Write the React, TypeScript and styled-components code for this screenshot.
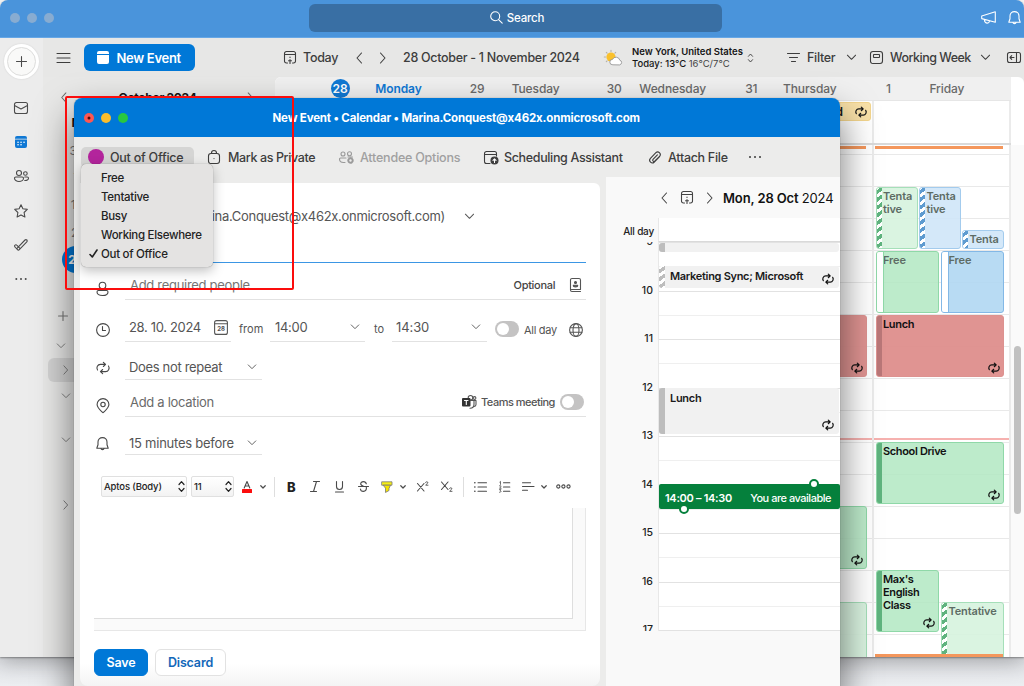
import React from 'react'
import styled, { createGlobalStyle, css } from 'styled-components'

const GlobalStyle = createGlobalStyle`
*{ box-sizing:border-box; }
body{
  margin:0;
  overflow:hidden;
  font-family:Inter, "Liberation Sans", sans-serif;
  font-size:12px;
  color:#3d3d3d;
}
`
const Desktop = styled.div`
position:relative;
width:1024px;
height:686px;
overflow:hidden;
background:linear-gradient(#fff 0 20px, #e3e5e9 20px 660px, #eceef1 686px);
`

/* ---------- shared ---------- */
const Svg = styled.svg<{ $w?: number }>`
flex:none;
display:block;
fill:none;
stroke:currentColor;
stroke-width:${(props) => props.$w ?? 1.1};
stroke-linecap:round;
stroke-linejoin:round;
overflow:visible;
`
const Text = styled.span<{ $w?: number; $size?: number; $weight?: number; $ls?: number; $color?: string }>`
flex:none;
white-space:nowrap;
${(props) => props.$w && css`width:${props.$w}px;`}
font-size:${(props) => props.$size ?? 12.5}px;
font-weight:${(props) => props.$weight ?? 500};
letter-spacing:${(props) => props.$ls ?? -0.3}px;
color:${(props) => props.$color ?? 'inherit'};
`
type ChevronProps = { dir: 'left' | 'right' | 'down'; size?: number; w?: number }
const chevrons = { left: 'M7 1 2.5 6 7 11', right: 'M3 1 7.5 6 3 11', down: 'M1 3.5 5.5 8 10 3.5' }
const Chevron = ({ dir, size = 11, w = 1.1 }: ChevronProps) => (
  <Svg $w={w} width={size} height={size} viewBox="0 0 11 12"><path d={chevrons[dir]} /></Svg>
)
const Updown = ({ h = 11, w = 1.1 }: { h?: number; w?: number }) => (
  <Svg $w={w} width={7} height={h} viewBox="0 0 7 12"><path d="M1 4 3.5 1.2 6 4M1 8l2.5 2.8L6 8" /></Svg>
)
const TodayIcon = () => (
  <Svg width="12" height="13" viewBox="0 0 12 13">
    <path d="M3.5 12H2.4A1.9 1.9 0 0 1 .5 10V2.4A1.9 1.9 0 0 1 2.4.5h7.2a1.9 1.9 0 0 1 1.900 1.900V10a1.900 1.900 0 0 1-1.900 2H8.500M.5 3.500h11M6 6v.5M6 8.500v4M4.500 9.800h3" />
  </Svg>
)
const RepeatIcon = ({ size = 12, w = 1.2 }: { size?: number; w?: number }) => (
  <Svg $w={w} width={size} height={size} viewBox="0 0 12 12">
    <path d="M1.300 7.700A3.100 3.100 0 0 1 3.800 2.900H8M6.300 1.100 8.200 2.900 6.300 4.700M10.700 4.300A3.100 3.100 0 0 1 8.200 9.100H4M5.700 10.900 3.800 9.100 5.700 7.300" />
  </Svg>
)
const BellIcon = () => (
  <Svg width="13" height="14" viewBox="0 0 13 14">
    <path d="M6.500.6C3.800.6 2 2.600 2 5v2.700L.8 11.200h11.400L11 7.700V5C11 2.600 9.200.6 6.500.6ZM4.800 11.400a1.800 1.800 0 0 0 3.400 0" />
  </Svg>
)

/* ---------- main window ---------- */
const MainWindow = styled.div`
width:1024px;
height:657px;
display:flex;
flex-direction:column;
overflow:hidden;
border-radius:8px 8px 0 0;
background:#e8e8e7;
box-shadow:0 1px 2px rgba(0,0,0,.35), 0 4px 22px rgba(0,0,0,.3);
`
const TitleBar = styled.header`
height:38px;
flex:none;
display:flex;
align-items:center;
padding:0 3px 2px 9.500px;
background:#4a94db;
border-bottom:1px solid #66a7e6;
color:#fff;
`
const Dots = styled.div`
width:299.500px;
display:flex;
gap:7.300px;
`
const Dot = styled.i<{ $color: string }>`
width:10px;
height:10px;
flex:none;
border-radius:50%;
background:${(props) => props.$color};
display:flex;
align-items:center;
justify-content:center;
`
const SearchBox = styled.div`
width:413px;
height:28px;
border-radius:6px;
background:#396fa4;
display:flex;
align-items:center;
justify-content:center;
gap:4px;
padding-left:3px;
`
const TitleIcons = styled.div`
margin-left:auto;
display:flex;
align-items:center;
gap:12px;
`
const Body = styled.div`
flex:1;
min-height:0;
display:flex;
`
const Rail = styled.nav`
width:43px;
flex:none;
background:#ececec;
display:flex;
flex-direction:column;
align-items:center;
padding:6px 1px 0 0;
color:#4b4b4b;
`
const AddButton = styled.div`
width:35px;
height:35px;
border-radius:50%;
background:#fff;
box-shadow:0 0 2px rgba(0,0,0,.12);
display:flex;
align-items:center;
justify-content:center;
margin-bottom:12px;
`
const AddRing = styled.div`
width:29px;
height:29px;
border-radius:50%;
border:1px solid #dcdcdb;
background:#f9f9f8;
display:flex;
align-items:center;
justify-content:center;
`
const RailItem = styled.div<{ $active?: boolean }>`
height:34.200px;
display:flex;
align-items:center;
color:${(props) => (props.$active ? '#0f78d4' : 'inherit')};
`
const Content = styled.div`
flex:1;
display:flex;
flex-direction:column;
min-width:0;
`
const Toolbar = styled.div`
height:39px;
flex:none;
display:flex;
align-items:center;
padding-left:14px;
background:#e7e7e6;
`
const NewEventButton = styled.div`
width:111px;
height:27px;
margin:0 89px 0 14px;
border-radius:6px;
background:#0078d7;
color:#fff;
display:flex;
align-items:center;
padding-left:13px;
gap:7.500px;
`
const Gap = styled.span<{ $w: number }>`
flex:none;
width:${(props) => props.$w}px;
`
const Weather = styled.div`
width:115px;
display:flex;
flex-direction:column;
color:#161616;
line-height:12px;
`
const Lower = styled.div`
flex:1;
min-height:0;
display:flex;
`
const MonthPane = styled.aside`
width:232px;
flex:none;
padding-top:13px;
`
const MonthHead = styled.div`
display:flex;
align-items:center;
justify-content:space-between;
height:14px;
padding:0 19px 0 16px;
color:#6b6b6b;
b{ color:#161616; font-size:12px; letter-spacing:-.3px; }
`
const MonthEdge = styled.div`
display:flex;
flex-direction:column;
padding:5px 0 0 26px;
color:#777;
`
const MonthDay = styled.span<{ $today?: boolean; $dark?: boolean }>`
width:16px;
height:27.400px;
display:flex;
align-items:center;
justify-content:center;
font-size:12px;
font-weight:${(props) => (props.$today || props.$dark ? 700 : 400)};
color:${(props) => (props.$today ? '#fff' : props.$dark ? '#111' : 'inherit')};
${(props) => props.$today && css`
width:28px;
margin-left:-7px;
border-radius:50%;
background:#0078d7;
`}
`
const TreeRow = styled.div<{ $gap: number; $left: number; $selected?: boolean }>`
height:24px;
display:flex;
align-items:center;
margin:${(props) => props.$gap}px 0 0 5px;
padding-left:${(props) => props.$left}px;
color:#777;
${(props) => props.$selected && css`background:#d3d3d3; border-radius:6px;`}
`
const Calendar = styled.section`
flex:1;
min-width:0;
display:flex;
border-radius:6px 6px 0 0;
overflow:hidden;
background:#fff;
`
const CalMain = styled.div`
width:736px;
flex:none;
`
const WeekHead = styled.div`
height:24px;
display:flex;
padding-left:50.500px;
background:#f0f0f0;
border-bottom:1px solid #e6e6e6;
`
const DayHead = styled.div<{ $today?: boolean }>`
width:137.200px;
display:flex;
align-items:center;
color:${(props) => (props.$today ? '#0f78d4' : '#6a6a6a')};
font-size:12px;
font-weight:${(props) => (props.$today ? 600 : 500)};
letter-spacing:-.1px;
`
const DayNumber = styled.span<{ $today?: boolean }>`
width:19px;
height:19px;
margin:0 4px 0 5px;
border-radius:50%;
display:flex;
align-items:center;
justify-content:center;
background:${(props) => (props.$today ? '#0f78d4' : 'transparent')};
color:${(props) => (props.$today ? '#fff' : 'inherit')};
`
const DayName = styled.span`
width:90px;
text-align:center;
`
const AllDayBand = styled.div`
height:44px;
border-bottom:2px solid #dadada;
display:grid;
grid-template-columns:599px 137px;
`
const BandCell = styled.div`
border-right:2px solid #ebebeb;
display:flex;
justify-content:flex-end;
`
const AllDayEvent = styled.div`
width:200px;
height:19px;
margin:1px 1px 0 0;
border-radius:3px;
border:1px solid #f3d58d;
background:#f9e1a8;
display:flex;
align-items:center;
justify-content:flex-end;
gap:12px;
padding-right:3px;
font-weight:600;
color:#161616;
`
const Hours = styled.div`
height:512px;
display:grid;
grid-template-columns:599px 137px;
background:repeating-linear-gradient(#e9e9e9 0 1px, transparent 1px 32px) 0 9px;
`
const HourColumn = styled.div`
position:relative;
border-right:2px solid #ebebeb;
overflow:hidden;
`
const tones = {
  green: { bg: 'rgba(177,232,194,.85)', line: '#8fd8a8', bar: '#5fb37e' },
  pale: { bg: 'rgba(214,243,222,.9)', line: '#a5dfb9', bar: '#5fb37e' },
  sky: { bg: 'rgba(207,229,248,.9)', line: '#a3cbed', bar: '#5e9bd0' },
  blue: { bg: 'rgba(176,215,242,.9)', line: '#83b8e6', bar: '#83b8e6' },
  red: { bg: 'rgba(221,139,137,.92)', line: '#dd9290', bar: '#b97778' },
}
type Tone = keyof typeof tones
type BlockProps = { $x: number; $y: number; $w: number; $h: number; $tone: Tone; $bar?: 'solid' | 'stripes' | 'empty'; $muted?: boolean }
const EventBlock = styled.div<BlockProps>`
position:absolute;
left:${(props) => props.$x}px;
top:${(props) => props.$y}px;
width:${(props) => props.$w}px;
height:${(props) => props.$h}px;
border:1px solid ${(props) => tones[props.$tone].line};
border-radius:3px;
background:${(props) => tones[props.$tone].bg};
padding:2px 0 0 6.500px;
font-size:11px;
font-weight:600;
line-height:13px;
letter-spacing:${(props) => (props.$muted ? -0.15 : -0.35)}px;
color:${(props) => (props.$muted ? '#5d6b64' : '#111')};
white-space:pre-line;
overflow:hidden;
&::before{
  content:"";
  position:absolute;
  left:-1px;
  top:-1px;
  bottom:-1px;
  width:6px;
  ${(props) => props.$bar === 'solid' && css`background:${tones[props.$tone].bar};`}
  ${(props) => props.$bar === 'empty' && css`background:#fff; border:1px solid ${tones[props.$tone].line};`}
  ${(props) => props.$bar === 'stripes' && css`background:repeating-linear-gradient(145deg, #fff 0 3px, ${tones[props.$tone].bar} 3px 6.400px);`}
}
`
const Corner = styled.span`
position:absolute;
right:3px;
bottom:2px;
color:#111;
`
const OrangeBar = styled.div<{ $x: number; $y: number; $w: number }>`
position:absolute;
left:${(props) => props.$x}px;
top:${(props) => props.$y}px;
width:${(props) => props.$w}px;
height:3px;
background:#f4975c;
`
const NowLine = styled.div`
position:absolute;
left:0;
right:-2px;
top:293px;
height:2px;
background:#f6b1af;
`
const ScrollTrack = styled.div`
flex:1;
margin-top:68px;
background:#fafafa;
padding:201px 0 0 3px;
`
const ScrollThumb = styled.div`
width:7px;
height:168px;
border-radius:4px;
background:#c1c1c1;
`

/* ---------- event window ---------- */
const EventWindow = styled.div`
position:absolute;
left:74px;
top:98px;
width:766px;
height:610px;
border-radius:8px;
background:#ececeb;
box-shadow:0 0 1px rgba(0,0,0,.5), 0 18px 36px 2px rgba(0,0,0,.5);
display:flex;
flex-direction:column;
overflow:hidden;
`
const EventTitle = styled.header`
height:39px;
flex:none;
display:flex;
align-items:center;
padding-left:9.500px;
background:#0078d7;
color:#fff;
`
const Lights = styled.div`
display:flex;
gap:7.200px;
width:189px;
`
const EventTools = styled.div`
height:40px;
flex:none;
display:flex;
align-items:center;
padding-left:7px;
color:#3d3d3d;
`
const StatusButton = styled.div`
width:113px;
height:21px;
border-radius:5px;
background:#d5d5d4;
display:flex;
align-items:center;
padding-left:7px;
gap:6px;
margin-right:14px;
`
const StatusDot = styled.i`
width:16px;
height:16px;
border-radius:50%;
background:#b3249c;
`
const EventBody = styled.div`
flex:1;
min-height:0;
display:flex;
justify-content:space-between;
padding-left:6px;
`
const Form = styled.div`
width:520px;
height:503px;
margin-top:6px;
border-radius:0 6px 8px 8px;
background:linear-gradient(#fff 480px, #f4f4f4);
color:#555;
`
const Row = styled.div<{ $h: number }>`
height:${(props) => props.$h}px;
display:flex;
align-items:flex-end;
padding-left:16px;
`
const RowIcon = styled.span<{ $up: number }>`
width:29px;
flex:none;
color:#474747;
padding-bottom:${(props) => props.$up}px;
`
const Field = styled.div<{ $w: number; $h?: number; $mr?: number; $pad?: number; $accent?: boolean }>`
width:${(props) => props.$w}px;
height:${(props) => props.$h ?? 28}px;
flex:none;
margin-right:${(props) => props.$mr ?? 0}px;
padding-left:${(props) => props.$pad ?? 4}px;
display:flex;
align-items:center;
border-bottom:1px solid ${(props) => (props.$accent ? '#3b96e4' : '#e2e2e2')};
`
const Inline = styled.div<{ $w: number; $h: number; $end?: boolean; $color?: string }>`
width:${(props) => props.$w}px;
height:${(props) => props.$h}px;
flex:none;
display:flex;
align-items:center;
justify-content:${(props) => (props.$end ? 'flex-end' : 'flex-start')};
color:${(props) => props.$color ?? 'inherit'};
`
const Toggle = styled.span`
width:24px;
height:16px;
flex:none;
border-radius:8px;
background:#c4c3c3;
padding:2px;
&::after{
  content:"";
  display:block;
  width:12px;
  height:12px;
  border-radius:50%;
  background:#fff;
}
`
const FormatBar = styled.div`
height:21px;
margin:21px 0 11px 21px;
display:flex;
align-items:center;
color:#4a4a4a;
`
const Select = styled.div<{ $w: number }>`
width:${(props) => props.$w}px;
height:21px;
margin-right:4px;
padding:0 1px 0 2px;
border:1px solid #e0e0e0;
border-radius:2px;
background:linear-gradient(#fff, #f3f3f3);
display:flex;
align-items:center;
justify-content:space-between;
color:#222;
font-size:9.500px;
font-weight:500;
letter-spacing:-.15px;
`
const Divider = styled.i`
width:1px;
height:20px;
background:#dedede;
`
const Editor = styled.div`
width:492px;
height:123px;
margin-left:14px;
padding:0 12px 11px 0;
background:#fafafa;
border-right:1px solid #e7e7e7;
border-bottom:1px solid #e7e7e7;
`
const EditorPage = styled.div`
height:111px;
background:#fff;
border-right:1px solid #dedede;
border-bottom:1px solid #dedede;
`
const Actions = styled.div`
display:flex;
gap:7px;
padding:18px 0 0 14px;
`
const ActionButton = styled.div<{ $primary?: boolean }>`
width:${(props) => (props.$primary ? 54 : 71)}px;
height:27px;
border-radius:6px;
border:1px solid ${(props) => (props.$primary ? '#0078d7' : '#e2e2e2')};
background:${(props) => (props.$primary ? '#0078d7' : '#fff')};
color:${(props) => (props.$primary ? '#fff' : '#1267b9')};
display:flex;
align-items:center;
justify-content:center;
font-size:12.500px;
font-weight:600;
letter-spacing:-.15px;
`
const DayPane = styled.div`
width:234px;
background:#f9f9f9;
color:#222;
`
const DayPaneHead = styled.div`
height:41px;
display:flex;
align-items:center;
padding-left:53px;
color:#444;
`
const DayGrid = styled.div`
display:grid;
grid-template-columns:52px 1fr;
grid-template-rows:24px 389px;
`
const AllDayLabel = styled.div`
text-align:right;
padding:7px 4px 0 0;
font-size:10px;
font-weight:500;
letter-spacing:-.2px;
`
const AllDaySlot = styled.div`
background:#fff;
border-left:1px solid #e8e8e8;
border-bottom:1px solid #d9d9d9;
`
const HourLabels = styled.div`
overflow:hidden;
`
const HourLabel = styled.div`
height:48.500px;
transform:translateY(-7px);
padding-right:5px;
text-align:right;
font-size:10.500px;
font-weight:500;
line-height:14px;
`
const Slots = styled.div`
position:relative;
background:repeating-linear-gradient(#e2e2e2 0 1px, transparent 1px 24.250px, #efefef 24.250px 25.250px, transparent 25.250px 48.500px), #fff;
border-left:1px solid #e8e8e8;
`
const Slot = styled.div<{ $y: number; $h: number; $stripes?: boolean }>`
position:absolute;
left:0;
right:1px;
top:${(props) => props.$y}px;
height:${(props) => props.$h}px;
border-radius:3px;
overflow:hidden;
background:#f1f1f1;
padding:3px 0 0 11px;
font-size:11px;
font-weight:600;
letter-spacing:-.3px;
color:#1a1a1a;
&::before{
  content:"";
  position:absolute;
  left:0;
  top:0;
  bottom:0;
  width:6px;
  background:${(props) => (props.$stripes ? 'repeating-linear-gradient(145deg, #fff 0 3px, #bdbdbd 3px 6.400px)' : '#bdbdbd')};
}
${Corner}{
  right:5px;
  bottom:3px;
}
`
const Availability = styled.div`
position:absolute;
left:0;
right:0;
top:242px;
height:25px;
border-radius:2px;
background:#05803c;
color:#fff;
display:flex;
align-items:center;
justify-content:space-between;
padding:2px 9px 0 6px;
`
const Handle = styled.i<{ $x: number; $y: number }>`
position:absolute;
left:${(props) => props.$x}px;
top:${(props) => props.$y}px;
width:10px;
height:10px;
border-radius:50%;
border:2px solid #05803c;
background:#fff;
`
const StatusMenu = styled.ul`
position:absolute;
left:81px;
top:164px;
width:132px;
height:103px;
margin:0;
padding:4px 0 0;
list-style:none;
border-radius:5px;
background:#e4e3e2;
box-shadow:0 0 1px rgba(0,0,0,.45), 0 4px 12px rgba(0,0,0,.25);
`
const StatusItem = styled.li`
height:19px;
display:flex;
align-items:center;
color:#222;
`
const Check = styled.span`
width:20px;
padding-left:8px;
`
const Highlight = styled.div`
position:absolute;
left:65px;
top:96px;
width:229px;
height:194px;
border:2px solid #fb0d0d;
border-radius:2px;
`

const statuses = ['Free', 'Tentative', 'Busy', 'Working Elsewhere', 'Out of Office']
const days = [
  { number: 28, name: 'Monday', today: true },
  { number: 29, name: 'Tuesday' },
  { number: 30, name: 'Wednesday' },
  { number: 31, name: 'Thursday' },
  { number: 1, name: 'Friday' },
]
const calendars: { gap: number; left: number; dir: ChevronProps['dir']; selected?: boolean }[] = [
  { gap: 6, left: 8, dir: 'down' },
  { gap: 0, left: 13, dir: 'right', selected: true },
  { gap: 2, left: 13, dir: 'down' },
  { gap: 20, left: 13, dir: 'down' },
  { gap: 41, left: 13, dir: 'right' },
]
const thursday: (BlockProps & { repeat?: boolean })[] = [
  { $x: 480, $y: 170, $w: 112, $h: 62, $tone: 'red', repeat: true },
  { $x: 480, $y: 361, $w: 112, $h: 63, $tone: 'green', repeat: true },
  { $x: 480, $y: 457, $w: 112, $h: 80, $tone: 'pale' },
]
const friday: (BlockProps & { text: string; repeat?: boolean })[] = [
  { $x: 1.5, $y: 42, $w: 42.5, $h: 62, $tone: 'pale', $bar: 'stripes', $muted: true, text: 'Tenta\ntive' },
  { $x: 45, $y: 42, $w: 42, $h: 62, $tone: 'sky', $bar: 'stripes', $muted: true, text: 'Tenta\ntive' },
  { $x: 88, $y: 85, $w: 42, $h: 19, $tone: 'sky', $bar: 'stripes', $muted: true, text: 'Tenta' },
  { $x: 1.5, $y: 106, $w: 63.5, $h: 62, $tone: 'green', $bar: 'empty', $muted: true, text: 'Free' },
  { $x: 67, $y: 106, $w: 63, $h: 62, $tone: 'blue', $bar: 'empty', $muted: true, text: 'Free' },
  { $x: 1.5, $y: 170, $w: 128.5, $h: 62, $tone: 'red', $bar: 'solid', text: 'Lunch', repeat: true },
  { $x: 1.5, $y: 297, $w: 128.5, $h: 62, $tone: 'green', $bar: 'solid', text: 'School Drive', repeat: true },
  { $x: 1.5, $y: 425, $w: 63.5, $h: 62, $tone: 'green', $bar: 'solid', text: "Max's\nEnglish\nClass", repeat: true },
  { $x: 67, $y: 457, $w: 63, $h: 80, $tone: 'pale', $bar: 'stripes', $muted: true, text: 'Tentative' },
]

const RailIcons = () => (
  <>
    <RailItem>
      <Svg width="14" height="12" viewBox="0 0 14 12"><rect x=".5" y=".5" width="13" height="11" rx="2" /><path d="M.5 3.500 7 7l6.500-3.500" /></Svg>
    </RailItem>
    <RailItem $active>
      <Svg width="12" height="12" viewBox="0 0 12 12">
        <path d="M0 2.700V2a2 2 0 0 1 2-2h8a2 2 0 0 1 2 2v.7zM0 3.600h12V10a2 2 0 0 1-2 2H2a2 2 0 0 1-2-2z" fill="#0f78d4" stroke="none" />
        <path d="M3 6.300h.1M6 6.300h.1M9 6.300h.1M3 8.800h.1M6 8.800h.1" stroke="#fff" strokeWidth="1.500" />
      </Svg>
    </RailItem>
    <RailItem>
      <Svg width="15" height="12" viewBox="0 0 15 12">
        <circle cx="5" cy="3" r="2.500" /><circle cx="11.400" cy="3.500" r="1.800" />
        <path d="M1.800 7h6.400a1.300 1.300 0 0 1 1.300 1.300C9.500 10 7.500 11.500 5 11.500S.5 10 .5 8.300A1.300 1.300 0 0 1 1.800 7ZM10.800 7h2.500a1.200 1.200 0 0 1 1.200 1.200c0 1.500-1.800 2.500-3.800 2.300" />
      </Svg>
    </RailItem>
    <RailItem>
      <Svg width="14" height="14" viewBox="0 0 14 14"><path d="m7 .8 1.900 4 4.400.6-3.200 3.100.8 4.500L7 10.900 3.100 13l.8-4.500L.7 5.400l4.400-.6z" /></Svg>
    </RailItem>
    <RailItem>
      <Svg width="14" height="12" viewBox="0 0 14 12"><path d="M1 6.200a1.200 1.200 0 0 1 1.800 0l1.600 1.600L11 1a1.200 1.200 0 0 1 1.800 1.800L5.300 10.700a1.200 1.200 0 0 1-1.800 0L1 8a1.200 1.200 0 0 1 0-1.800ZM4.400 7.800l1.300 1.400M3 9.300l1.400-1.500" /></Svg>
    </RailItem>
    <RailItem>
      <Svg $w={2} width="12" height="4" viewBox="0 0 12 4"><path d="M1.300 2h.01M6 2h.01M10.700 2h.01" /></Svg>
    </RailItem>
  </>
)

const MainToolbar = () => (
  <Toolbar>
    <Svg width="13" height="10" viewBox="0 0 13 10"><path d="M0 .5h13M0 5h13M0 9.500h13" /></Svg>
    <NewEventButton>
      <Svg width="12" height="13" viewBox="0 0 12 13"><path d="M0 3V2a2 2 0 0 1 2-2h8a2 2 0 0 1 2 2v1zM0 4h12v7a2 2 0 0 1-2 2H2a2 2 0 0 1-2-2z" fill="#fff" stroke="none" /></Svg>
      <Text $weight={600} $size={13}>New Event</Text>
    </NewEventButton>
    <TodayIcon />
    <Gap $w={7} />
    <Text $w={50.5}>Today</Text>
    <Chevron dir="left" size={12} />
    <Gap $w={11.5} />
    <Chevron dir="right" size={12} />
    <Gap $w={14} />
    <Text $w={201}>28 October - 1 November 2024</Text>
    <Svg width="20" height="16" viewBox="0 0 20 16">
      <g stroke="#b5b0a4"><path d="M7 .2v1.200M2.300 2.300l.8.800M.3 7h1.200M11.700 2.300l-.8.800M2.300 11.700l.8-.8" /></g>
      <circle cx="7" cy="7" r="4.600" fill="#f9c02c" stroke="none" />
      <path d="M8.500 14.800a2.700 2.700 0 0 1 0-5.400 3.900 3.900 0 0 1 7.300.8 2.400 2.400 0 0 1 .2 4.600z" fill="#fff" stroke="#8b8b8b" strokeWidth=".8" />
    </Svg>
    <Gap $w={8} />
    <Weather>
      <Text $size={9.5} $weight={600} $ls={0}>New York, United States</Text>
      <Text $size={9.5} $ls={0}>Today: 13°C <Text $size={9.5} $ls={0} $weight={400} $color="#444">16°C/7°C</Text></Text>
    </Weather>
    <Updown h={10} />
    <Gap $w={33} />
    <Svg width="13" height="9" viewBox="0 0 13 9"><path d="M.5.5h12M2.500 4.500h8M4.500 8.500h4" /></Svg>
    <Gap $w={7} />
    <Text $w={38.5}>Filter</Text>
    <Chevron dir="down" />
    <Gap $w={13.5} />
    <Svg width="13" height="13" viewBox="0 0 13 13"><rect x=".5" y=".5" width="12" height="12" rx="2.500" /><rect x="3.500" y="3.500" width="6" height="3" rx=".5" /></Svg>
    <Gap $w={7} />
    <Text $w={90} $ls={-0.5}>Working Week</Text>
    <Chevron dir="down" />
    <Gap $w={16} />
    <Svg width="14" height="11" viewBox="0 0 14 11"><rect x=".5" y=".5" width="13" height="10" rx="2" /><path d="M9.500.5v10M7 5.500H3M4.700 3.700 3 5.500l1.700 1.800" /></Svg>
  </Toolbar>
)

const MonthSide = () => (
  <MonthPane>
    <MonthHead><Chevron dir="left" size={11} /><b>October 2024</b><Chevron dir="right" size={11} /></MonthHead>
    <MonthEdge>
      <MonthDay $dark>M</MonthDay>
      <MonthDay>30</MonthDay>
      <MonthDay>7</MonthDay>
      <MonthDay>14</MonthDay>
      <MonthDay>21</MonthDay>
      <MonthDay $today>28</MonthDay>
    </MonthEdge>
    <TreeRow $gap={31} $left={10}><Svg width="10" height="10" viewBox="0 0 10 10"><path d="M5 .5v9M.5 5h9" /></Svg></TreeRow>
    {calendars.map((row, i) => <TreeRow key={i} $gap={row.gap} $left={row.left} $selected={row.selected}>
      <Chevron dir={row.dir} size={10} />
    </TreeRow>)}
  </MonthPane>
)

const WeekView = () => (
  <Calendar>
    <CalMain>
      <WeekHead>
        {days.map((day) => <DayHead key={day.number} $today={day.today}>
          <DayNumber $today={day.today}>{day.number}</DayNumber>
          <DayName>{day.name}</DayName>
        </DayHead>)}
      </WeekHead>
      <AllDayBand>
        <BandCell><AllDayEvent>Canned<RepeatIcon /></AllDayEvent></BandCell>
        <BandCell />
      </AllDayBand>
      <Hours>
        <HourColumn>
          <OrangeBar $x={480} $y={1} $w={111} />
          {thursday.map(({ repeat, ...block }) => <EventBlock key={block.$y} {...block}>
            {repeat && <Corner><RepeatIcon /></Corner>}
          </EventBlock>)}
          <NowLine />
        </HourColumn>
        <HourColumn>
          <OrangeBar $x={1} $y={1} $w={128} />
          {friday.map(({ text, repeat, ...block }) => <EventBlock key={`${block.$x}-${block.$y}`} {...block}>
            {text}{repeat && <Corner><RepeatIcon /></Corner>}
          </EventBlock>)}
          <OrangeBar $x={1} $y={509} $w={128} />
          <NowLine />
        </HourColumn>
      </Hours>
    </CalMain>
    <ScrollTrack><ScrollThumb /></ScrollTrack>
  </Calendar>
)

const EventToolbar = () => (
  <EventTools>
    <StatusButton><StatusDot /><Text $ls={-0.25}>Out of Office</Text></StatusButton>
    <Svg width="12" height="14" viewBox="0 0 12 14"><rect x=".5" y="3.500" width="11" height="10" rx="2.500" /><path d="M3.500 3.500V3a2.500 2.500 0 0 1 5 0v.5M6 8.500v.1" /></Svg>
    <Gap $w={8} />
    <Text $w={111} $ls={-0.38}>Mark as Private</Text>
    <Inline $w={21} $h={16} $color="#9a9a9a">
      <Svg width="15" height="13" viewBox="0 0 15 13">
        <circle cx="4" cy="3" r="2" /><circle cx="10.500" cy="2.700" r="2" />
        <path d="M7 7H1.500a1 1 0 0 0-1 1c0 1.800 1.500 3.500 4 3.500h1.500M9 6h4.500" />
        <circle cx="11.500" cy="9.500" r="2.200" strokeWidth="2" strokeDasharray="1.200 .7" />
      </Svg>
    </Inline>
    <Text $w={124} $ls={-0.22} $color="#a0a0a0">Attendee Options</Text>
    <Svg width="14" height="13" viewBox="0 0 14 13"><path d="M6 12.500H2.500a2 2 0 0 1-2-2v-8a2 2 0 0 1 2-2h8a2 2 0 0 1 2 2V5M.5 3.500h12" /><circle cx="10.500" cy="9.500" r="3.500" fill="#3d3d3d" /><path d="M10.500 11.500V8M9 9.300 10.500 7.800 12 9.300" stroke="#fff" /></Svg>
    <Gap $w={6} />
    <Text $w={144} $ls={-0.35}>Scheduling Assistant</Text>
    <Svg width="13" height="13" viewBox="0 0 13 13"><path d="M11.600 5.500 6.300 11a2.600 2.600 0 0 1-3.900-3.600L7.900 1.700a2.600 2.600 0 0 1 3.900 3.400L6.900 10A1.200 1.200 0 0 1 5 8.400l4.400-4.500" /></Svg>
    <Gap $w={7} />
    <Text $w={81}>Attach File</Text>
    <Svg $w={2} width="12" height="4" viewBox="0 0 12 4"><path d="M1 2h.01M6 2h.01M11 2h.01" /></Svg>
  </EventTools>
)

const EventForm = () => (
  <Form>
    <Row $h={51}>
      <Inline $w={349} $h={36} $end>
        <Text $weight={400} $size={13}>(Marina.Conquest@x462x.onmicrosoft.com)</Text>
      </Inline>
      <Inline $w={40} $h={36}><Gap $w={19} /><Chevron dir="down" /></Inline>
    </Row>
    <Row $h={29}><RowIcon $up={0} /><Field $w={461} $h={24} $accent /></Row>
    <Row $h={37}>
      <RowIcon $up={3}>
        <Svg width="13" height="16" viewBox="0 0 13 16"><circle cx="6.500" cy="4.500" r="3.300" /><path d="M2.400 9.500h8.200a1.400 1.400 0 0 1 1.400 1.400C12 13 9.800 14.500 6.500 14.500S1 13 1 10.900a1.400 1.400 0 0 1 1.400-1.400Z" /></Svg>
      </RowIcon>
      <Field $w={461} $h={30} $pad={5}>
        <Text $weight={400} $size={13} $color="#757575" $w={383.5}>Add required people</Text>
        <Text $size={11} $color="#444" $w={56.5}>Optional</Text>
        <Svg width="11" height="14" viewBox="0 0 11 14"><path d="M.5 12V2A1.500 1.500 0 0 1 2 .5h7A1.500 1.500 0 0 1 10.500 2v9.500H1.500M.5 12A1.500 1.500 0 0 0 2 13.500h8.500" /><circle cx="5.500" cy="4.500" r="1" fill="currentColor" /><path d="M3.300 7.200h4.400c0 2.200-4.400 2.200-4.400 0Z" fill="currentColor" /></Svg>
      </Field>
    </Row>
    <Row $h={42}>
      <RowIcon $up={5}><Svg width="14" height="14" viewBox="0 0 14 14"><circle cx="7" cy="7" r="6.400" /><path d="M6.500 3.500V7.500H9.500" /></Svg></RowIcon>
      <Field $w={106} $h={29} $mr={8}>
        <Text $weight={400} $size={13} $w={85} $ls={-0.33}>28. 10. 2024</Text>
        <Svg width="14" height="15" viewBox="0 0 14 15">
          <rect x=".6" y=".6" width="12.800" height="13.800" rx="2" /><path d="M.6 3.800h12.800" />
          <text x="7" y="11.200" textAnchor="middle" fontSize="6" fontWeight="700" fill="#555" stroke="none">28</text>
        </Svg>
      </Field>
      <Inline $w={31} $h={26}><Text $size={11} $weight={400} $ls={0}>from</Text></Inline>
      <Field $w={95} $h={29} $mr={9} $pad={5}><Text $weight={400} $size={13} $w={75}>14:00</Text><Chevron dir="down" size={10} /></Field>
      <Inline $w={18} $h={26}><Text $size={11} $weight={400} $ls={0}>to</Text></Inline>
      <Field $w={95} $h={29} $mr={8}><Text $weight={400} $size={13} $w={75} $ls={-0.1}>14:30</Text><Chevron dir="down" size={10} /></Field>
      <Inline $w={29} $h={26}><Toggle /></Inline>
      <Inline $w={44.5} $h={25}><Text $size={11} $weight={400}>All day</Text></Inline>
      <Inline $w={16} $h={25}>
        <Svg width="14" height="14" viewBox="0 0 14 14"><circle cx="7" cy="7" r="6.400" /><ellipse cx="7" cy="7" rx="3" ry="6.400" /><path d="M1.200 4.700h11.600M1.200 9.300h11.600" /></Svg>
      </Inline>
    </Row>
    <Row $h={38}>
      <RowIcon $up={5}><RepeatIcon size={14} w={0.95} /></RowIcon>
      <Field $w={137} $h={25}><Text $weight={400} $size={13} $w={118} $ls={-0.33}>Does not repeat</Text><Chevron dir="down" size={10} /></Field>
    </Row>
    <Row $h={37}>
      <RowIcon $up={4}><Svg width="14" height="15" viewBox="0 0 14 15"><path d="M7 .6a5.900 5.900 0 0 1 5.900 6c0 3-3 5.500-5.200 7.600a1 1 0 0 1-1.400 0C4.100 12.100 1.100 9.600 1.100 6.600A5.900 5.900 0 0 1 7 .6Z" /><circle cx="7" cy="6.500" r="2.200" /></Svg></RowIcon>
      <Field $w={461} $h={30} $pad={5}>
        <Text $weight={400} $size={13} $color="#6a6a6a" $w={332}>Add a location</Text>
        <Svg width="15" height="14" viewBox="0 0 15 14">
          <circle cx="8.500" cy="2.800" r="2.300" /><circle cx="12.500" cy="3" r="1.400" /><path d="M8 13.300c3 0 4-2 4-4V5.500M9 5.500h5v4c0 1-.8 1.900-1.800 2" />
          <rect x="0" y="3" width="8.500" height="8.500" rx="1" fill="#333" stroke="none" /><path d="M2.500 5.500h3.500M4.300 5.500v4" stroke="#fff" />
        </Svg>
        <Gap $w={4} />
        <Text $size={11} $color="#555" $w={79} $ls={-0.5}>Teams meeting</Text>
        <Toggle />
      </Field>
    </Row>
    <Row $h={38}>
      <RowIcon $up={4}><BellIcon /></RowIcon>
      <Field $w={137} $h={24}><Text $weight={400} $size={13} $w={118} $ls={-0.25}>15 minutes before</Text><Chevron dir="down" size={10} /></Field>
    </Row>
    <FormatBar>
      <Select $w={86}>Aptos (Body)<Updown h={13} w={1.2} /></Select>
      <Select $w={43}>11<Updown h={13} w={1.2} /></Select>
      <Gap $w={4} />
      <Svg width="10" height="14" viewBox="0 0 10 14"><path d="M2.200 8 5 1.500 7.800 8M3.300 6h3.400" /><rect x="0" y="9" width="10" height="4" rx=".5" fill="#fb0d0d" stroke="none" /></Svg>
      <Gap $w={8} />
      <Chevron dir="down" size={6} w={2.4} />
      <Gap $w={8} />
      <Divider />
      <Gap $w={12} />
      <Text $weight={800} $size={13} $w={23} $color="#222">B</Text>
      <Svg width="10" height="11" viewBox="0 0 10 11"><path d="M3.500.5h6M.5 10.500h6M6.500.5l-3 10" /></Svg>
      <Gap $w={15} />
      <Svg width="9" height="12" viewBox="0 0 9 12"><path d="M1.500.5v5a3 3 0 0 0 6 0v-5M.5 11h8" /></Svg>
      <Gap $w={14} />
      <Svg width="11" height="11" viewBox="0 0 11 11"><path d="M8.300 2.800C8 1.300 6.800.6 5.400.6 3.800.6 2.700 1.500 2.700 2.800c0 1.400 1.300 2 2.800 2.400M.5 5.500h10M8.300 6c.6 2.600-.8 4.400-2.900 4.400-1.600 0-2.800-.8-3-2.400" /></Svg>
      <Gap $w={12} />
      <Svg width="12" height="12" viewBox="0 0 12 12"><path d="M1 .8h10v3.400H1z" fill="#f6ee17" stroke="#777" strokeWidth=".8" /><path d="M2.500 4.200h7L8 7.500v2L4.500 11.500V7.500z" fill="#f6e500" stroke="#777" strokeWidth=".8" /></Svg>
      <Gap $w={7} />
      <Chevron dir="down" size={6} w={2.4} />
      <Gap $w={10.5} />
      <Svg width="12" height="11" viewBox="0 0 12 11"><path d="M.5 2.500 7 10M7 2.500.5 10" /><path d="M8.500 1.500C9 .3 11 .5 10.800 1.800 10.700 2.600 9 3.300 8.700 4.200H11" strokeWidth=".9" /></Svg>
      <Gap $w={12} />
      <Svg width="12" height="11" viewBox="0 0 12 11"><path d="M.5 1 7 8.500M7 1 .5 8.500" /><path d="M8.500 7.500C9 6.300 11 6.500 10.800 7.800 10.700 8.600 9 9.300 8.700 10.300H11" strokeWidth=".9" /></Svg>
      <Gap $w={10} />
      <Divider />
      <Gap $w={10.5} />
      <Svg width="13" height="10" viewBox="0 0 13 10"><path d="M4 .8h8.500M4 5h8.500M4 9.200h8.500" /><path d="M.8.8h.1M.8 5h.1M.8 9.200h.1" strokeWidth="1.600" /></Svg>
      <Gap $w={12} />
      <Svg width="11" height="12" viewBox="0 0 11 12"><path d="M4.500 1.800h6.300M4.500 6h6.300M4.500 10.200h6.300" /><path d="M.8 1 1.500.4v3M.5 4.800h1.300v1L.6 7.300h1.500M.5 8.600h1.400L1.200 9.800c1.300 0 1 1.700-.7 1.500" strokeWidth=".8" /></Svg>
      <Gap $w={11.5} />
      <Svg width="12" height="9" viewBox="0 0 12 9"><path d="M.5.8h8M.5 4.500h11.500M.5 8.200h5" /></Svg>
      <Gap $w={7} />
      <Chevron dir="down" size={6} w={2.4} />
      <Gap $w={9} />
      <Svg width="15" height="5" viewBox="0 0 15 5"><circle cx="2.300" cy="2.500" r="1.600" /><circle cx="7.400" cy="2.500" r="1.600" /><circle cx="12.500" cy="2.500" r="1.600" /></Svg>
    </FormatBar>
    <Editor><EditorPage /></Editor>
    <Actions>
      <ActionButton $primary>Save</ActionButton>
      <ActionButton>Discard</ActionButton>
    </Actions>
  </Form>
)

const DayView = () => (
  <DayPane>
    <DayPaneHead>
      <Chevron dir="left" size={12} />
      <Gap $w={10} />
      <TodayIcon />
      <Gap $w={11} />
      <Chevron dir="right" size={12} />
      <Gap $w={7} />
      <Text $weight={600} $size={13} $ls={-0.12} $color="#111">Mon, 28 Oct <Text $weight={400} $size={13} $ls={-0.12}>2024</Text></Text>
    </DayPaneHead>
    <DayGrid>
      <AllDayLabel>All day</AllDayLabel>
      <AllDaySlot />
      <HourLabels>
        {[9, 10, 11, 12, 13, 14, 15, 16, 17].map((hour) => <HourLabel key={hour}>{hour}</HourLabel>)}
      </HourLabels>
      <Slots>
        <Slot $y={1} $h={9} />
        <Slot $y={24} $h={22} $stripes>Marketing Sync; Microsoft<Corner><RepeatIcon /></Corner></Slot>
        <Slot $y={146} $h={46}>Lunch<Corner><RepeatIcon /></Corner></Slot>
        <Availability>
          <Text $size={11} $weight={600}>14:00 – 14:30</Text>
          <Text $size={11} $ls={-0.48}>You are available</Text>
        </Availability>
        <Handle $x={150} $y={237} />
        <Handle $x={20} $y={262} />
      </Slots>
    </DayGrid>
  </DayPane>
)

export default function App() {
  return (
    <Desktop>
      <GlobalStyle />
      <MainWindow>
        <TitleBar>
          <Dots>{[0, 1, 2].map((n) => <Dot key={n} $color="#88acd1" />)}</Dots>
          <SearchBox>
            <Svg width="13" height="13" viewBox="0 0 13 13"><circle cx="5.200" cy="5.200" r="4.500" /><path d="m8.600 8.600 3.600 3.600" /></Svg>
            <Text $size={11.5} $ls={-0.2}>Search</Text>
          </SearchBox>
          <TitleIcons>
            <Svg width="15" height="13" viewBox="0 0 15 13"><path d="M14.300.8v10.400L.7 7.600V5zM3.500 8.500c-.3 2.200 1.200 3.600 2.800 3.600 1.200 0 2-.8 2.200-2" /></Svg>
            <BellIcon />
          </TitleIcons>
        </TitleBar>
        <Body>
          <Rail>
            <AddButton><AddRing><Svg width="11" height="11" viewBox="0 0 11 11"><path d="M5.500.5v10M.5 5.500h10" /></Svg></AddRing></AddButton>
            <RailIcons />
          </Rail>
          <Content>
            <MainToolbar />
            <Lower>
              <MonthSide />
              <WeekView />
            </Lower>
          </Content>
        </Body>
      </MainWindow>
      <EventWindow>
        <EventTitle>
          <Lights>
            <Dot $color="#fc5753"><Svg width="4" height="4" viewBox="0 0 4 4"><circle cx="2" cy="2" r="1.500" fill="#5a0a06" stroke="none" /></Svg></Dot>
            <Dot $color="#fabd2d" />
            <Dot $color="#29c73f" />
          </Lights>
          <Text $weight={700} $size={11.5} $ls={-0.16}>New Event • Calendar • Marina.Conquest@x462x.onmicrosoft.com</Text>
        </EventTitle>
        <EventToolbar />
        <EventBody>
          <EventForm />
          <DayView />
        </EventBody>
      </EventWindow>
      <StatusMenu>
        {statuses.map((status) => <StatusItem key={status}>
          <Check>{status === 'Out of Office' && <Svg $w={1.6} width="9" height="9" viewBox="0 0 9 9"><path d="M1 5.500 3.300 8 8 1" /></Svg>}</Check>
          <Text $size={11.5}>{status}</Text>
        </StatusItem>)}
      </StatusMenu>
      <Highlight />
    </Desktop>
  )
}
